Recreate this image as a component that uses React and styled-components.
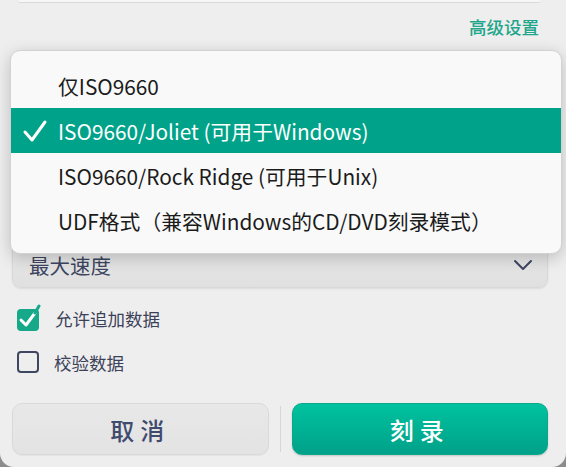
import React from "react";
import styled, { createGlobalStyle } from "styled-components";

const GlobalStyle = createGlobalStyle`
  html, body {
    margin: 0;
    padding: 0;
    background: #8c8c8c;
  }
  body {
    font-family: "Noto Sans CJK SC", "Noto Sans", sans-serif;
  }
`;

const Window = styled.div`
  position: relative;
  width: 566px;
  height: 467px;
  box-sizing: border-box;
  background: #eeeeee;
  border-radius: 0 0 14px 14px;
  padding: 0 18px 12px 12px;
  display: flex;
  flex-direction: column;
  overflow: hidden;
`;

const TopStrip = styled.div`
  height: 2px;
  margin: 0 7px 0 6px;
  background: #f6f6f6;
  border-bottom: 1px solid #d9d9d9;
  border-radius: 0 0 6px 6px;
`;

const HeaderRow = styled.div`
  height: 51px;
  display: flex;
  align-items: center;
  justify-content: flex-end;
  padding-right: 9px;
  padding-bottom: 4px;
  box-sizing: border-box;
`;

const LinkText = styled.span`
  color: #1fa68b;
  font-size: 17.5px;
  font-weight: 500;
`;

const Fields = styled.div`
  display: flex;
  flex-direction: column;
  gap: 10px;
  padding-top: 20px;
`;

const SelectBox = styled.div`
  height: 46px;
  box-sizing: border-box;
  display: flex;
  align-items: center;
  justify-content: space-between;
  padding: 0 14px 0 16px;
  background: linear-gradient(#e7e7e7, #e0e0e0);
  border: 1px solid #d8d8d8;
  border-radius: 9px;
  box-shadow: 0 1px 2px rgba(0, 0, 0, 0.08);
  color: #3d4560;
  font-size: 20.5px;
`;

const Checks = styled.div`
  display: flex;
  flex-direction: column;
  gap: 14px;
  margin-top: 15px;
`;

const CheckRow = styled.label`
  height: 30px;
  display: flex;
  align-items: center;
  gap: 14px;
  padding-left: 5px;
  color: #3b4158;
  font-size: 17.5px;
`;

const EmptyBox = styled.span`
  width: 22px;
  height: 22px;
  box-sizing: border-box;
  border: 2px solid #3e4660;
  border-radius: 4px;
  margin-right: 1px;
`;

const ButtonRow = styled.div`
  display: flex;
  align-items: center;
  gap: 11px;
  margin-top: 26px;
  height: 52px;
`;

const Button = styled.button`
  flex: 1;
  height: 52px;
  border-radius: 10px;
  font-family: inherit;
  font-size: 24px;
  letter-spacing: 6px;
  padding-left: 6px;
  font-weight: 500;
  border: 1px solid ${(p) => (p.$primary ? "#0aa88d" : "#d9d9d9")};
  color: ${(p) => (p.$primary ? "#ffffff" : "#3f4a6d")};
  background: ${(p) =>
    p.$primary
      ? "linear-gradient(#00c29f, #00a188)"
      : "linear-gradient(#e8e8e8, #e3e3e3)"};
  box-shadow: ${(p) =>
    p.$primary ? "0 1px 2px rgba(0,0,0,0.18)" : "0 1px 1px rgba(0,0,0,0.05)"};
`;

const Divider = styled.div`
  width: 1px;
  height: 46px;
  background: #d6d6d6;
`;

const Popup = styled.div`
  position: absolute;
  top: 50px;
  left: 10px;
  right: 4px;
  background: #f9f9f9;
  border: 1px solid #d2d2d2;
  border-radius: 10px;
  box-shadow: 0 4px 16px rgba(0, 0, 0, 0.2);
  padding: 12px 0 10px;
  z-index: 10;
`;

const Option = styled.div`
  height: 45px;
  display: flex;
  align-items: center;
  padding-left: 47px;
  font-size: 20.8px;
  white-space: nowrap;
  color: ${(p) => (p.$selected ? "#ffffff" : "#1b1b1b")};
  background: ${(p) => (p.$selected ? "#00a389" : "transparent")};
  position: relative;
`;

const CheckMark = styled.svg`
  position: absolute;
  left: 11px;
  top: 11px;
`;

const options = [
  "仅ISO9660",
  "ISO9660/Joliet (可用于Windows)",
  "ISO9660/Rock Ridge (可用于Unix)",
  "UDF格式（兼容Windows的CD/DVD刻录模式）",
];

function Chevron() {
  return (
    <svg width="20" height="12" viewBox="0 0 20 12">
      <polyline points="2,2 10,10 18,2" fill="none" stroke="#3d4560" strokeWidth="2" strokeLinecap="round" strokeLinejoin="round" />
    </svg>
  );
}

function CheckedBox() {
  return (
    <svg width="24" height="28" viewBox="0 0 24 28">
      <rect x="0" y="5" width="22" height="22" rx="4" fill="#15a98a" />
      <polyline points="4,16 9,21 18,9" fill="none" stroke="#ffffff" strokeWidth="3" strokeLinecap="round" strokeLinejoin="round" />
      <line x1="18" y1="9" x2="22" y2="2" stroke="#15a98a" strokeWidth="3" strokeLinecap="round" />
    </svg>
  );
}

export default function App() {
  const selected = 1;
  return (
    <>
      <GlobalStyle />
      <Window>
        <TopStrip />
        <HeaderRow>
          <LinkText>高级设置</LinkText>
        </HeaderRow>
        <Fields>
          {/* controls hidden under the open dropdown */}
          <SelectBox />
          <SelectBox />
          <SelectBox />
          <SelectBox>
            最大速度
            <Chevron />
          </SelectBox>
        </Fields>
        <Checks>
          <CheckRow>
            <CheckedBox />
            允许追加数据
          </CheckRow>
          <CheckRow>
            <EmptyBox />
            校验数据
          </CheckRow>
        </Checks>
        <ButtonRow>
          <Button>取消</Button>
          <Divider />
          <Button $primary>刻录</Button>
        </ButtonRow>
        <Popup>
          {options.map((o, i) => (
            <Option key={o} $selected={i === selected}>
              {i === selected && (
                <CheckMark width="26" height="24" viewBox="0 0 26 24">
                  <polyline points="3,13 10,21 23,3" fill="none" stroke="#ffffff" strokeWidth="3" strokeLinecap="round" strokeLinejoin="round" />
                </CheckMark>
              )}
              {o}
            </Option>
          ))}
        </Popup>
      </Window>
    </>
  );
}
